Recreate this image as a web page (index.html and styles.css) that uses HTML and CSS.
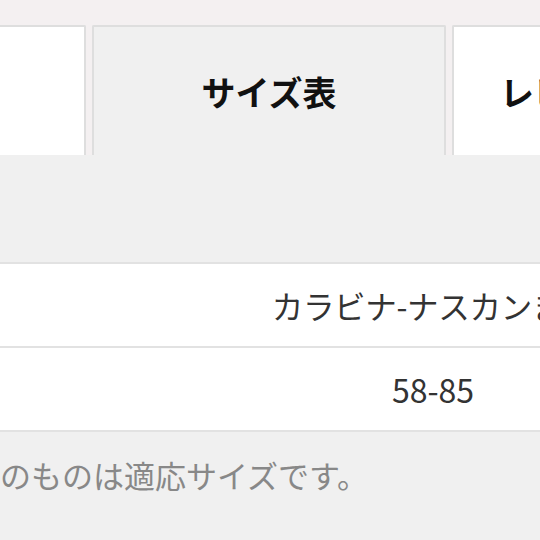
FILE: index.html
```html
<!DOCTYPE html>
<html lang="ja">
<head>
<meta charset="utf-8">
<link rel="stylesheet" href="styles.css">
</head>
<body>
<div class="page">
  <div class="tabs">
    <div class="tab">商品説明</div>
    <div class="tab tab-active">サイズ表</div>
    <div class="tab tab-right">レビュー</div>
  </div>
  <div class="panel">
    <div class="size-table">
      <div class="row">
        <div class="cell label"></div>
        <div class="cell value value-long">カラビナ-ナスカンまで</div>
      </div>
      <div class="row">
        <div class="cell label"></div>
        <div class="cell value">58-85</div>
      </div>
    </div>
    <p class="note">のものは適応サイズです。</p>
  </div>
</div>
</body>
</html>
```

FILE: styles.css
```css
html, body {
  margin: 0;
  padding: 0;
}
body {
  width: 540px;
  height: 540px;
  overflow: hidden;
  background: #f0f0f0;
  font-family: "Noto Sans CJK JP", "Noto Sans", sans-serif;
}
.page {
  width: 540px;
  overflow: hidden;
}
.tabs {
  display: flex;
  gap: 6px;
  margin-left: -268px;
  padding-top: 25px;
  background: #f4f0f1;
}
.tab {
  flex: 0 0 354px;
  box-sizing: border-box;
  height: 130px;
  border: 2px solid #dedede;
  border-bottom: none;
  border-radius: 2px 2px 0 0;
  background: #ffffff;
  display: flex;
  align-items: center;
  justify-content: center;
  font-size: 34px;
  font-weight: 700;
  color: #111;
  white-space: nowrap;
}
.tab-active {
  background: #f0f0f0;
}
.tab-right {
  justify-content: flex-start;
  padding-left: 46px;
}
.panel {
  background: #f0f0f0;
  padding-top: 107px;
}
.size-table {
  background: #fff;
  border-bottom: 2px solid #e2e2e2;
}
.row {
  display: grid;
  grid-template-columns: 326px 214px;
  height: 84px;
  box-sizing: border-box;
  border-top: 2px solid #e2e2e2;
}
.cell {
  display: flex;
  align-items: center;
  justify-content: center;
  white-space: nowrap;
  font-size: 32px;
  color: #333;
  line-height: 40px;
}
.value-long {
  font-size: 31.5px;
  letter-spacing: -0.3px;
}
.note {
  margin: 21px 0 0 0;
  font-size: 31px;
  line-height: 44px;
  color: #888;
  white-space: nowrap;
}
```
